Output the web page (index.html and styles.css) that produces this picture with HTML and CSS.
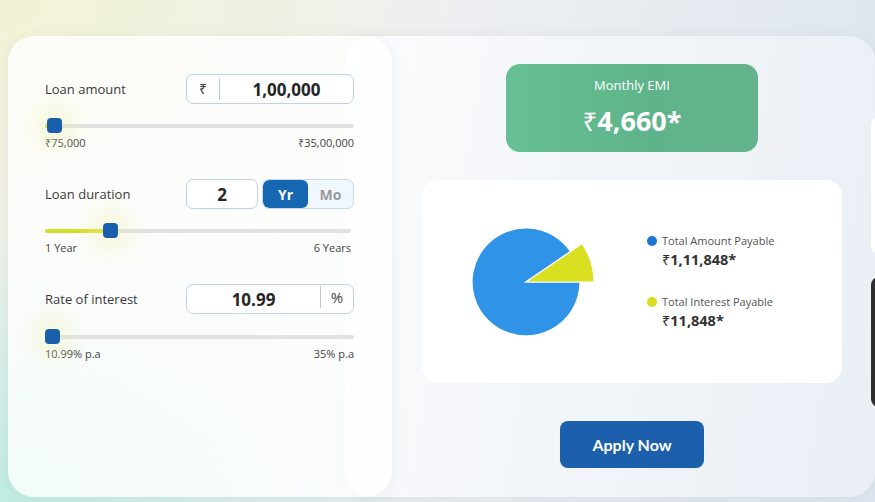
FILE: index.html
```html
<!DOCTYPE html>
<html lang="en">
<head>
<meta charset="utf-8">
<title>EMI Calculator</title>
<link rel="stylesheet" href="styles.css">
</head>
<body>
<div class="page">
  <section class="inputs-card">
    <div class="field">
      <div class="field-row">
        <span class="field-label">Loan amount</span>
        <div class="box box-wide">
          <span class="box-prefix">₹</span>
          <span class="box-value">1,00,000</span>
        </div>
      </div>
      <div class="slider">
        <div class="track">
          <div class="fill" style="width:2px"></div>
          <div class="thumb" style="left:2px"></div>
        </div>
      </div>
      <div class="range-labels"><span>₹75,000</span><span>₹35,00,000</span></div>
    </div>

    <div class="field">
      <div class="field-row">
        <span class="field-label">Loan duration</span>
        <div class="duration">
          <div class="box box-small"><span class="box-value">2</span></div>
          <div class="toggle">
            <span class="toggle-opt active">Yr</span>
            <span class="toggle-opt">Mo</span>
          </div>
        </div>
      </div>
      <div class="slider slider-short">
        <div class="track">
          <div class="fill" style="width:66px"></div>
          <div class="thumb" style="left:58px"></div>
        </div>
      </div>
      <div class="range-labels range-short"><span>1 Year</span><span>6 Years</span></div>
    </div>

    <div class="field">
      <div class="field-row">
        <span class="field-label">Rate of interest</span>
        <div class="box box-wide">
          <span class="box-value">10.99</span>
          <span class="box-suffix">%</span>
        </div>
      </div>
      <div class="slider slider-low">
        <div class="track">
          <div class="fill" style="width:0px"></div>
          <div class="thumb" style="left:0px"></div>
        </div>
      </div>
      <div class="range-labels"><span>10.99% p.a</span><span>35% p.a</span></div>
    </div>
  </section>

  <section class="result-panel">
    <div class="emi-box">
      <div class="emi-title">Monthly EMI</div>
      <div class="emi-value"><span class="rs">₹</span>4,660*</div>
    </div>

    <div class="chart-card">
      <svg class="pie" width="140" height="140" viewBox="0 0 140 140">
        <path d="M70,70 L124,70 A54,54 0 1,1 114.6,39.5 Z" fill="#2f93e8" stroke="#ffffff" stroke-width="1.2"/>
        <path d="M70,70 L126.1,31.6 A68,68 0 0,1 138,70 Z" fill="#d9e021" stroke="#ffffff" stroke-width="1.2"/>
      </svg>
      <div class="legend">
        <div class="legend-item">
          <span class="dot dot-blue"></span>
          <span class="legend-label">Total Amount Payable</span>
          <span class="legend-amount"><span class="rs">₹</span>1,11,848*</span>
        </div>
        <div class="legend-item">
          <span class="dot dot-yellow"></span>
          <span class="legend-label">Total Interest Payable</span>
          <span class="legend-amount"><span class="rs">₹</span>11,848*</span>
        </div>
      </div>
    </div>

    <button class="apply-btn">Apply Now</button>
  </section>

  <div class="peek peek-light"></div>
  <div class="peek peek-dark"></div>
</div>
</body>
</html>
```

FILE: styles.css
```css
* { box-sizing: border-box; }

html, body {
  margin: 0;
  padding: 0;
  width: 875px;
  height: 502px;
  overflow: hidden;
}

body {
  font-family: "Open Sans", "Noto Sans", sans-serif;
  color: #333;
  background:
    radial-gradient(ellipse 460px 320px at 0% 0%, rgba(242,243,212,1), rgba(242,243,212,0) 100%),
    radial-gradient(ellipse 440px 280px at 0% 100%, rgba(192,237,225,1), rgba(192,237,225,0) 100%),
    linear-gradient(100deg, #f1f1ef 0%, #eef0f2 45%, #dde5ee 100%);
}

.page {
  position: relative;
  display: flex;
  align-items: flex-start;
  padding: 36px 0 0 8px;
  height: 502px;
}

/* ---------- left card ---------- */
.inputs-card {
  position: relative;
  z-index: 2;
  flex: 0 0 384px;
  height: 461px;
  border-radius: 26px;
  background: rgba(255,255,255,0.8);
  box-shadow: 0 2px 14px rgba(120,130,140,0.10);
  padding: 38px 38px 0 37px;
  display: flex;
  flex-direction: column;
  gap: 29px;
}

.field { display: flex; flex-direction: column; }

.field-row {
  display: flex;
  align-items: center;
  justify-content: space-between;
  height: 30px;
}

.field-label {
  font-size: 13px;
  color: #3a3a3a;
}

.box {
  height: 30px;
  border: 1px solid #bcd3ee;
  border-radius: 7px;
  background: #fff;
  display: flex;
  align-items: center;
}

.box-wide { width: 168px; }
.box-small { width: 72px; justify-content: center; }

.box-prefix {
  flex: 0 0 33px;
  height: 22px;
  border-right: 1px solid #b4c9e2;
  font-family: "Noto Sans", sans-serif;
  font-size: 14px;
  color: #444;
  display: flex;
  align-items: center;
  justify-content: center;
  line-height: 1;
}

.box-suffix {
  flex: 0 0 33px;
  height: 22px;
  border-left: 1px solid #b4c9e2;
  font-size: 15px;
  color: #444;
  display: flex;
  align-items: center;
  justify-content: center;
  margin-top: -4px;
}

.box-value {
  flex: 1;
  text-align: center;
  font-size: 17px;
  font-weight: 700;
  color: #262626;
}

.box-small .box-value { flex: none; }

.duration {
  display: flex;
  gap: 4px;
}

.toggle {
  display: flex;
  width: 92px;
  height: 30px;
  border: 1px solid #c4d8ef;
  border-radius: 7px;
  background: #f1f7fe;
  overflow: hidden;
}

.toggle-opt {
  flex: 1;
  display: flex;
  align-items: center;
  justify-content: center;
  font-size: 14px;
  font-weight: 700;
  color: #9a9a9a;
}

.toggle-opt.active {
  background: #1467b0;
  color: #fff;
  border-radius: 6px;
}

/* sliders */
.slider { margin-top: 20px; }
.slider-short { margin-right: 3px; }
.slider-low { margin-top: 21px; }

.track {
  position: relative;
  height: 4px;
  background: #e1e1e1;
  border-radius: 2px;
}

.fill {
  height: 4px;
  background: #d6e026;
  border-radius: 2px;
}

.thumb {
  position: absolute;
  top: -6px;
  width: 15px;
  height: 15px;
  border-radius: 4px;
  background: #1a5fac;
  box-shadow: 0 0 18px 12px rgba(238,242,170,0.35);
}

.range-labels {
  margin-top: 7px;
  display: flex;
  justify-content: space-between;
  font-size: 11px;
  line-height: 15px;
  color: #444;
}

.range-short { margin-right: 3px; }

.rs {
  font-family: "Noto Sans", sans-serif;
  font-weight: 400;
}

/* ---------- right panel ---------- */
.result-panel {
  position: relative;
  z-index: 1;
  flex: 1;
  height: 461px;
  margin-left: -47px;
  border-radius: 26px;
  background: linear-gradient(100deg, #fbfcfd 0%, #f3f6f9 40%, #eaeff6 100%);
  box-shadow: 0 2px 14px rgba(120,130,150,0.12);
  padding: 28px 3px 0 47px;
  display: flex;
  flex-direction: column;
  align-items: center;
}

.emi-box {
  width: 252px;
  height: 88px;
  border-radius: 14px;
  background: linear-gradient(90deg, #66c093 0%, #5fb38a 60%, #64b38d 100%);
  color: #fff;
  text-align: center;
  padding-top: 12px;
}

.emi-title {
  font-size: 13px;
  line-height: 18px;
  font-weight: 500;
}

.emi-value {
  margin-top: 9px;
  font-size: 27px;
  line-height: 36px;
  font-weight: 700;
}

.emi-value .rs { font-size: 26px; }

.chart-card {
  margin-top: 28px;
  width: 420px;
  height: 203px;
  background: #fff;
  border-radius: 16px;
  display: flex;
  align-items: center;
  padding-left: 34px;
}

.pie { flex: none; }

.legend {
  margin-left: 51px;
  margin-top: 2px;
  display: flex;
  flex-direction: column;
  gap: 23px;
}

.legend-item {
  display: grid;
  grid-template-columns: 10px auto;
  column-gap: 5px;
  align-items: center;
}

.dot {
  width: 10px;
  height: 10px;
  border-radius: 50%;
}

.dot-blue { background: #1a76d2; }
.dot-yellow { background: #d7df20; }

.legend-label {
  font-size: 11px;
  line-height: 15px;
  color: #555;
}

.legend-amount {
  grid-column: 2;
  font-size: 14.5px;
  line-height: 22px;
  font-weight: 700;
  color: #333;
}

.apply-btn {
  margin-top: 38px;
  width: 144px;
  height: 47px;
  border: none;
  border-radius: 8px;
  background: #1c60ad;
  color: #fff;
  font-family: "Lato", "Open Sans", sans-serif;
  font-size: 16px;
  font-weight: 700;
}

/* pieces of neighbouring widgets peeking in at the right edge */
.peek {
  position: absolute;
  z-index: 3;
  left: 871px;
  width: 20px;
}

.peek-light {
  top: 117px;
  height: 136px;
  background: #ffffff;
  border-radius: 7px;
}

.peek-dark {
  top: 277px;
  height: 130px;
  background: #2e2e2e;
  border-radius: 8px;
}
```
